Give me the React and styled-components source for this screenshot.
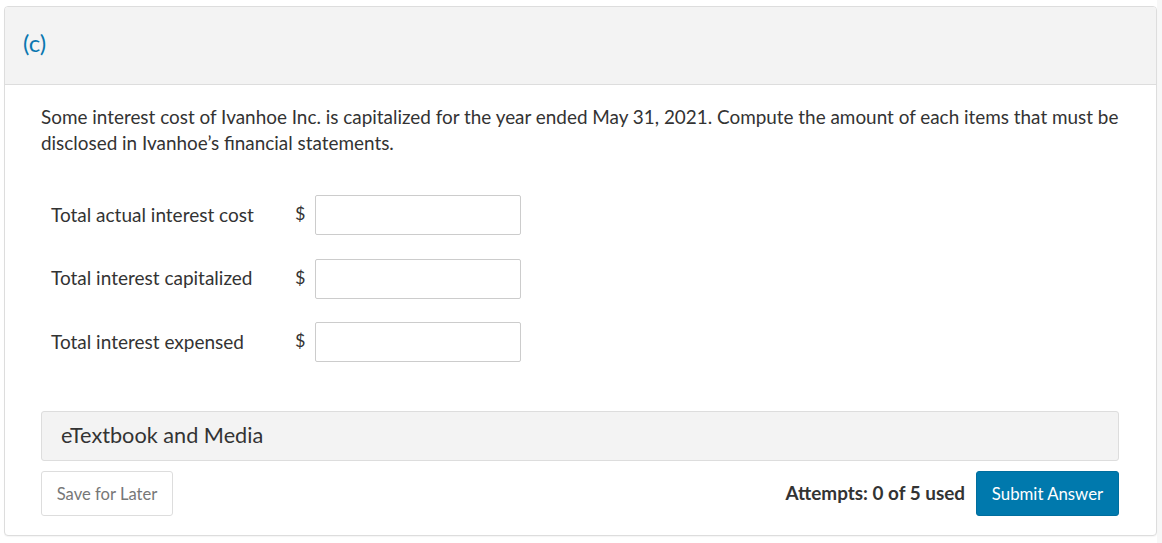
import React from "react";
import styled, { createGlobalStyle } from "styled-components";

const GlobalStyle = createGlobalStyle`
  body {
    margin: 0;
    background: #ffffff;
    font-family: Lato, "Open Sans", "Liberation Sans", sans-serif;
    color: #333333;
  }
`;

const rows = [
  "Total actual interest cost",
  "Total interest capitalized",
  "Total interest expensed",
];

const App = () => {
  return (
    <>
      <GlobalStyle />
      <Page>
        <Card>
          <Header>
            <PartLabel>(c)</PartLabel>
          </Header>
          <Body>
            <Question>
              Some interest cost of Ivanhoe Inc. is capitalized for the year ended May 31, 2021. Compute the
              amount of each items that must be disclosed in Ivanhoe’s financial statements.
            </Question>
            <Form>
              {rows.map(label => (
                <Row key={label}>
                  <Label>{label}</Label>
                  <Dollar>$</Dollar>
                  <Input type="text" />
                </Row>
              ))}
            </Form>
            <MediaBar>eTextbook and Media</MediaBar>
            <Actions>
              <SaveButton>Save for Later</SaveButton>
              <Right>
                <Attempts>Attempts: 0 of 5 used</Attempts>
                <SubmitButton>Submit Answer</SubmitButton>
              </Right>
            </Actions>
          </Body>
        </Card>
      </Page>
    </>
  );
};

export default App;

const Page = styled.div`
  width: 1162px;
  height: 543px;
  padding: 6px 0 0 4px;
  box-sizing: border-box;
  background: linear-gradient(to right, #ffffff 1157px, #f7f7f7 1157px);
`;

const Card = styled.div`
  width: 1153px;
  height: 530px;
  box-sizing: border-box;
  border: 1px solid #dddddd;
  border-radius: 4px;
  background: #ffffff;
  overflow: hidden;
  box-shadow: 0 1px 1px rgba(0, 0, 0, 0.04);
`;

const Header = styled.div`
  height: 78px;
  box-sizing: border-box;
  background: #f3f3f3;
  border-bottom: 1px solid #dddddd;
  display: flex;
  align-items: center;
  padding: 0 0 0 18px;
`;

const PartLabel = styled.span`
  font-size: 24px;
  color: #0a77b0;
  margin-top: -6px;
`;

const Body = styled.div`
  padding: 19px 37px 0 36px;
`;

const Question = styled.p`
  margin: 0;
  font-size: 18.9px;
  line-height: 26px;
  color: #333333;
`;

const Form = styled.div`
  display: flex;
  flex-direction: column;
  gap: 23.5px;
  margin-top: 39px;
  padding-left: 10px;
`;

const Row = styled.div`
  display: flex;
  align-items: center;
  height: 40px;
`;

const Label = styled.span`
  width: 244px;
  font-size: 19px;
  color: #333333;
  margin-top: -2px;
`;

const Dollar = styled.span`
  width: 20px;
  font-size: 18px;
  color: #333333;
  margin-top: -4px;
`;

const Input = styled.input`
  width: 206px;
  height: 40px;
  box-sizing: border-box;
  border: 1px solid #cccccc;
  border-radius: 2px;
  background: #ffffff;
  font-family: inherit;
  font-size: 16px;
  padding: 0 8px;
  outline: none;
`;

const MediaBar = styled.div`
  margin-top: 49px;
  height: 50px;
  box-sizing: border-box;
  background: #f3f3f3;
  border: 1px solid #dddddd;
  border-radius: 3px;
  display: flex;
  align-items: center;
  padding: 0 0 2px 19px;
  font-size: 21.7px;
  color: #333333;
`;

const Actions = styled.div`
  display: flex;
  justify-content: space-between;
  align-items: center;
  margin-top: 10px;
`;

const Right = styled.div`
  display: flex;
  align-items: center;
  gap: 11px;
`;

const SaveButton = styled.button`
  height: 45px;
  width: 132px;
  box-sizing: border-box;
  border: 1px solid #dddddd;
  border-radius: 3px;
  background: #ffffff;
  color: #777777;
  font-family: inherit;
  font-size: 16.6px;
`;

const Attempts = styled.span`
  font-size: 18.9px;
  font-weight: 700;
  color: #333333;
  margin-top: -3px;
`;

const SubmitButton = styled.button`
  height: 45px;
  width: 143px;
  box-sizing: border-box;
  border: 1px solid #006e9e;
  border-radius: 3px;
  background: #0079ad;
  color: #ffffff;
  font-family: inherit;
  font-size: 16.8px;
`;
